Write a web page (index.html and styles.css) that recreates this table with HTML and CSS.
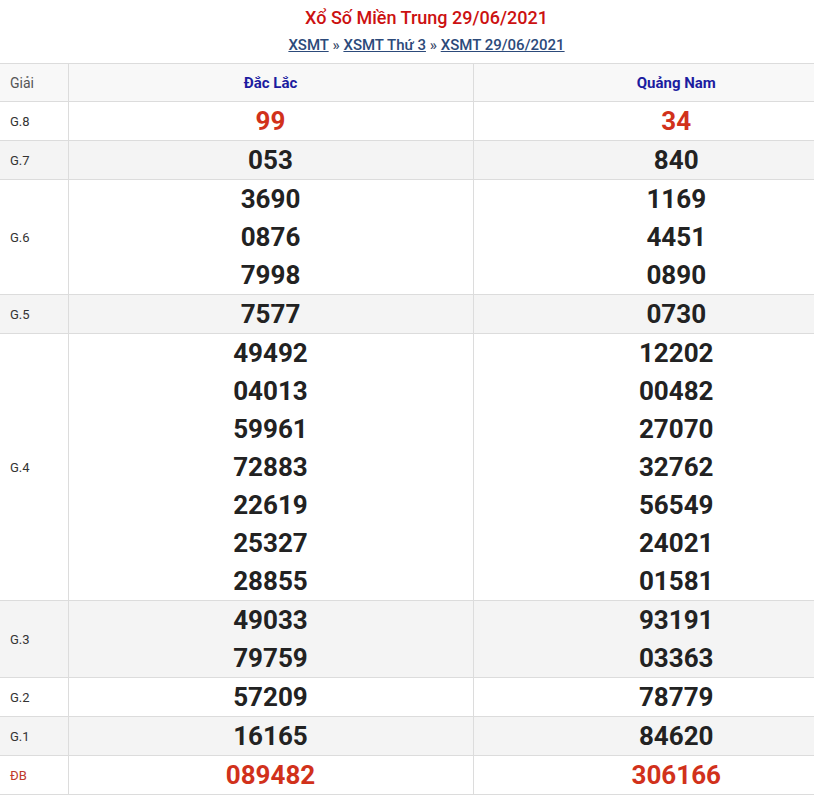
FILE: index.html
```html
<!DOCTYPE html>
<html lang="vi">
<head>
<meta charset="utf-8">
<link rel="stylesheet" href="styles.css">
</head>
<body>
<div class="page">
<div class="head">
  <h1 class="title">Xổ Số Miền Trung 29/06/2021</h1>
  <div class="crumbs"><a href="#">XSMT</a> » <a href="#">XSMT Thứ 3</a> » <a href="#">XSMT 29/06/2021</a></div>
</div>
<table class="kq">
  <colgroup><col class="c1"><col class="c2"><col class="c3"></colgroup>
  <thead>
    <tr class="hd"><th class="lbl">Giải</th><th>Đắc Lắc</th><th class="last">Quảng Nam</th></tr>
  </thead>
  <tbody>
    <tr><td class="lbl">G.8</td><td><div class="n red">99</div></td><td class="last"><div class="n red">34</div></td></tr>
    <tr class="alt"><td class="lbl">G.7</td><td><div class="n">053</div></td><td class="last"><div class="n">840</div></td></tr>
    <tr><td class="lbl">G.6</td><td><div class="n">3690</div><div class="n">0876</div><div class="n">7998</div></td><td class="last"><div class="n">1169</div><div class="n">4451</div><div class="n">0890</div></td></tr>
    <tr class="alt"><td class="lbl">G.5</td><td><div class="n">7577</div></td><td class="last"><div class="n">0730</div></td></tr>
    <tr><td class="lbl">G.4</td><td><div class="n">49492</div><div class="n">04013</div><div class="n">59961</div><div class="n">72883</div><div class="n">22619</div><div class="n">25327</div><div class="n">28855</div></td><td class="last"><div class="n">12202</div><div class="n">00482</div><div class="n">27070</div><div class="n">32762</div><div class="n">56549</div><div class="n">24021</div><div class="n">01581</div></td></tr>
    <tr class="alt"><td class="lbl">G.3</td><td><div class="n">49033</div><div class="n">79759</div></td><td class="last"><div class="n">93191</div><div class="n">03363</div></td></tr>
    <tr><td class="lbl">G.2</td><td><div class="n">57209</div></td><td class="last"><div class="n">78779</div></td></tr>
    <tr class="alt"><td class="lbl">G.1</td><td><div class="n">16165</div></td><td class="last"><div class="n">84620</div></td></tr>
    <tr><td class="lbl db">ĐB</td><td><div class="n red">089482</div></td><td class="last"><div class="n red">306166</div></td></tr>
  </tbody>
</table>
</div>
</body>
</html>
```
FILE: styles.css
```css
html, body { margin: 0; padding: 0; background: #fff; }
body { font-family: Roboto, "Liberation Sans", Arial, sans-serif; color: #222; }
.page { width: 814px; }
.head { text-align: center; padding: 5px 0 0 39px; height: 58px; box-sizing: border-box; }
.title { margin: 0; font-size: 18px; font-weight: 500; line-height: 26px; color: #cc1111; }
.crumbs { margin-top: 2px; font-size: 15px; font-weight: 500; line-height: 24px; color: #3a4a6a; }
.crumbs a { color: #2c4a7a; text-decoration: underline; }
.kq { border-collapse: collapse; width: 814px; table-layout: fixed; margin-top: 5px; }
.c1 { width: 68px; }
.c2 { width: 405px; }
.c3 { width: 341px; }
.kq th, .kq td { border: 1px solid #dcdcdc; padding: 0; text-align: center; vertical-align: middle; }
.kq tr > :first-child { border-left: none; }
.kq tr > :last-child { border-right: none; }
.kq .last { padding-left: 65px; }
.hd th { height: 37px; background: #f8f8f8; font-size: 15px; font-weight: 700; color: #1c1ca0; }
.kq .lbl { text-align: left; padding-left: 10px; font-size: 13px; font-weight: 400; color: #333; }
.hd .lbl { color: #555; font-size: 14px; }
.lbl.db { color: #c0392b; }
.alt td { background: #f4f4f4; }
.n { height: 38px; line-height: 38px; font-size: 26px; font-weight: 700; color: #222; }
.n.red { color: #d1311b; }
```
